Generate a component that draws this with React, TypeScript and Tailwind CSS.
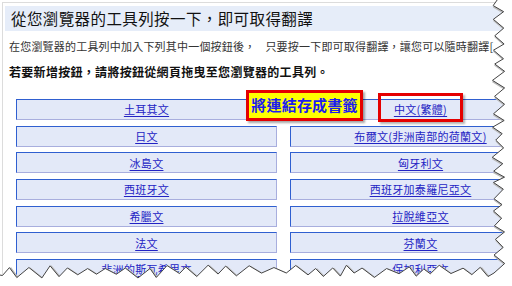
const left = ['土耳其文', '日文', '冰島文', '西班牙文', '希臘文', '法文', '非洲的斯瓦希里文']
const right = ['中文(繁體)', '布爾文(非洲南部的荷蘭文)', '匈牙利文', '西班牙加泰羅尼亞文', '拉脫維亞文', '芬蘭文', '保加利亞文']

// deterministic jagged tear line along the right and bottom edge
function tearPoints() {
  let seed = 7
  const rnd = () => {
    seed = (seed * 16807) % 2147483647
    return seed / 2147483647
  }
  const pts: [number, number][] = []
  let y = -4
  let flip = false
  while (y < 268) {
    pts.push([flip ? 492 + rnd() * 4 : 500 + rnd() * 5, y])
    y += 5 + rnd() * 5
    flip = !flip
  }
  pts.push([494, 273])
  let x = 488
  flip = false
  while (x > -6) {
    pts.push([x, flip ? 265 + rnd() * 4 : 273 + rnd() * 5])
    x -= 6 + rnd() * 7
    flip = !flip
  }
  pts.push([-6, 274])
  return pts
}

const pts = tearPoints()
const line = pts.map(p => p.join(',')).join(' ')
const outside = line + ' -6,300 520,300 520,-4'

export default function App() {
  return (
    <div className="relative w-[512px] h-[286px] overflow-hidden bg-white font-['Noto_Sans_CJK_TC',sans-serif]">
      <div className="pl-[2px] pt-[2px]">
        <div className="w-[600px] border-l border-t border-[#dcdcdc] pl-[2px] pt-[3px] pb-[20px]">
          {/* heading band */}
          <div className="h-[25px] bg-[#e6edf9] flex items-center pl-[6px] text-[15.5px] tracking-[0.4px] text-[#111] whitespace-nowrap">
            從您瀏覽器的工具列按一下，即可取得翻譯
          </div>
          <p className="mt-[8px] pl-[4px] text-[11px] leading-[14px] tracking-[0.2px] text-[#333] whitespace-nowrap">
            在您瀏覽器的工具列中加入下列其中一個按鈕後，<span className="ml-[10px]">只要按一下即可取得翻譯，讓您可以隨時翻譯[</span>
          </p>
          <p className="mt-[11px] pl-[4px] text-[12px] leading-[15px] tracking-[0.3px] font-bold text-[#111] whitespace-nowrap">
            若要新增按鈕，請將按鈕從網頁拖曳至您瀏覽器的工具列。
          </p>

          {/* bookmarklet buttons */}
          <div className="mt-[20px] ml-[11px] w-[535px] grid grid-cols-2 gap-x-[13px] gap-y-[5.7px]">
            {left.flatMap((l, i) => [l, right[i]]).map((label, i) => (
              <div key={i} className="h-[21px] flex items-center justify-center bg-[#e3e9f8] border-l border-t border-[#2f5fd0] border-r border-b border-r-[#a8aede] border-b-[#a8aede]">
                <a className="text-[11px] tracking-[0.3px] text-[#2323c4] underline underline-offset-2 whitespace-nowrap">{label}</a>
              </div>
            ))}
          </div>
        </div>
      </div>

      {/* annotations */}
      <div className="absolute left-[246px] top-[90px] w-[117px] h-[31px] bg-[#ffff00] border-[3px] border-[#e50000] shadow-[2px_2px_2px_rgba(0,0,0,0.35)] flex items-center justify-center text-[15px] font-bold tracking-[0.2px] text-[#1c1cf0] whitespace-nowrap">
        將連結存成書籤
      </div>
      <div className="absolute left-[378px] top-[93px] w-[85px] h-[29px] border-[3px] border-[#e50000] shadow-[2px_2px_2px_rgba(0,0,0,0.3)]" />

      {/* torn paper edge */}
      <svg className="absolute inset-0" width="512" height="286" viewBox="0 0 512 286">
        <polyline points={line} fill="none" stroke="#bbb" strokeWidth="2.5" transform="translate(1.5,1.5)" />
        <polygon points={outside} fill="#fff" />
        <polyline points={line} fill="none" stroke="#444" strokeWidth="1" />
      </svg>
    </div>
  )
}
